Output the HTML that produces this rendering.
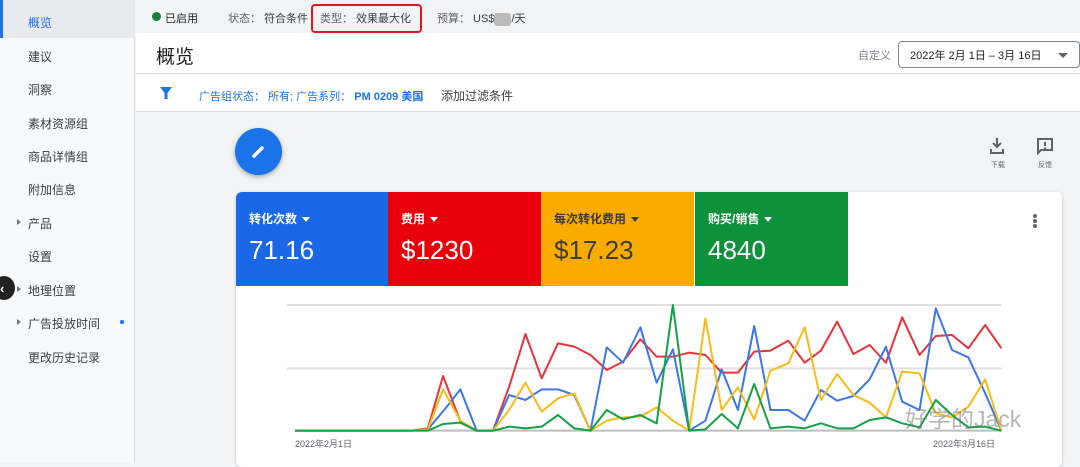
<!DOCTYPE html>
<html><head><meta charset="utf-8"><style>
*{margin:0;padding:0;box-sizing:border-box}
body{width:1080px;height:463px;overflow:hidden;background:#f1f3f4;font-family:"Liberation Sans","Noto Sans CJK SC",sans-serif;color:#3c4043;position:relative}
.a{position:absolute}
.side{left:0;top:0;width:135px;height:463px;background:#f8f9fa;border-right:1px solid #e0e0e0}
.side div{position:absolute;left:28px;font-size:12px;color:#3c4043}
.tri{position:absolute;left:17px;width:0;height:0;border-top:3px solid transparent;border-bottom:3px solid transparent;border-left:4px solid #777}
.t{font-size:11px;white-space:nowrap}
.tile{position:absolute;top:192px;height:94px;width:153px;color:#fff}
.tile .l{position:absolute;left:13px;top:18px;font-size:12px;font-weight:bold}
.tile .v{position:absolute;left:13px;top:43px;font-size:26px}
.dd{display:inline-block;width:0;height:0;border-left:4px solid transparent;border-right:4px solid transparent;border-top:5px solid currentColor;margin-left:5px;vertical-align:middle}
</style></head><body>
<div class="a side">
  <div style="left:0;top:0;width:135px;height:38px;background:#e8eaed;border-left:3px solid #1a73e8"></div>
  <div style="top:14px;color:#1a73e8">概览</div>
  <div style="top:48px">建议</div>
  <div style="top:81px">洞察</div>
  <div style="top:115px">素材资源组</div>
  <div style="top:148px">商品详情组</div>
  <div style="top:181px">附加信息</div>
  <span class="tri" style="top:219px"></span><div style="top:215px">产品</div>
  <div style="top:248px">设置</div>
  <span class="tri" style="top:286px"></span><div style="top:282px">地理位置</div>
  <span class="tri" style="top:319px"></span><div style="top:315px">广告投放时间</div>
  <span class="a" style="left:120px;top:320px;width:4px;height:4px;border-radius:50%;background:#1a73e8"></span>
  <div style="top:349px">更改历史记录</div>
</div>
<div class="a" style="left:-7px;top:276px;width:22px;height:24px;border-radius:50%;background:#222"></div>
<div class="a" style="left:0;top:281px;color:#fff;font-size:13px;font-weight:bold">‹</div>
<!-- top bar -->
<div class="a" style="left:136px;top:0;width:944px;height:33px;background:#f1f3f4"></div>
<span class="a" style="left:152px;top:12px;width:9px;height:9px;border-radius:50%;background:#188038"></span>
<div class="a t" style="left:165px;top:10px;color:#202124">已启用</div>
<div class="a t" style="left:228px;top:10px"><span style="color:#5f6368">状态：</span> 符合条件</div>
<div class="a" style="left:311px;top:4px;width:111px;height:29px;border:2px solid #e3161b;border-radius:4px"></div>
<div class="a t" style="left:320px;top:10px"><span style="color:#5f6368">类型：</span> 效果最大化</div>
<div class="a t" style="left:437px;top:10px"><span style="color:#5f6368">预算：</span> US$<span style="display:inline-block;width:17px;height:13px;background:#bbb;border-radius:3px;vertical-align:middle"></span>/天</div>
<!-- header -->
<div class="a" style="left:136px;top:33px;width:944px;height:41px;background:#fff;border-bottom:1px solid #dadce0"></div>
<div class="a" style="left:156px;top:42px;font-size:19px;color:#202124">概览</div>
<div class="a t" style="left:858px;top:47px;color:#80868b">自定义</div>
<div class="a" style="left:898px;top:41px;width:182px;height:27px;border:1px solid #80868b;border-radius:4px;background:#fff"></div>
<div class="a t" style="left:910px;top:47px;color:#202124">2022年 2月 1日 – 3月 16日</div>
<div class="a" style="left:1058px;top:53px;border-left:5px solid transparent;border-right:5px solid transparent;border-top:5px solid #5f6368"></div>
<!-- filter -->
<div class="a" style="left:136px;top:75px;width:944px;height:37px;background:#fff;border-bottom:1px solid #dadce0"></div>
<svg class="a" style="left:159px;top:86px" width="14" height="14" viewBox="0 0 14 14"><path d="M1 1h12l-4.5 6v6h-3V7z" fill="#1a73e8"/></svg>
<div class="a t" style="left:199px;top:88px;color:#1a73e8">广告组状态： 所有; 广告系列： <b>PM 0209 美国</b></div>
<div class="a" style="left:441px;top:87px;font-size:12px;color:#3c4043">添加过滤条件</div>
<!-- fab -->
<div class="a" style="left:235px;top:128px;width:47px;height:47px;border-radius:50%;background:#1a73e8;box-shadow:0 2px 5px rgba(0,0,0,.3)"></div>
<svg class="a" style="left:251px;top:144px" width="15" height="15" viewBox="0 0 15 15"><path d="M3 12L11 4" stroke="#fff" stroke-width="3.5" stroke-linecap="round"/></svg>
<svg class="a" style="left:989px;top:137px" width="16" height="18" viewBox="0 0 16 18"><path d="M8 1v9M4 6l4 4 4-4M2 12v4h12v-4" stroke="#5f6368" stroke-width="2" fill="none"/></svg>
<div class="a" style="left:991px;top:160px;font-size:7px;color:#5f6368">下载</div>
<svg class="a" style="left:1036px;top:137px" width="18" height="18" viewBox="0 0 18 18"><path d="M2 2h14v11H5l-3 3z" stroke="#5f6368" stroke-width="2" fill="none"/><path d="M9 5v4M9 10.5v1.5" stroke="#5f6368" stroke-width="2"/></svg>
<div class="a" style="left:1038px;top:160px;font-size:7px;color:#5f6368">反馈</div>
<!-- card -->
<div class="a" style="left:236px;top:192px;width:826px;height:275px;background:#fff;border-radius:6px;box-shadow:0 1px 3px rgba(0,0,0,.2)"></div>
<div class="tile" style="left:236px;background:#1a67e8;border-top-left-radius:6px"><div class="l">转化次数<span class="dd"></span></div><div class="v">71.16</div></div>
<div class="tile" style="left:388px;background:#e8000b"><div class="l">费用<span class="dd"></span></div><div class="v">$1230</div></div>
<div class="tile" style="left:541px;background:#f9ab00;color:#3c3c3c"><div class="l">每次转化费用<span class="dd"></span></div><div class="v">$17.23</div></div>
<div class="tile" style="left:695px;background:#0d9139"><div class="l">购买/销售<span class="dd"></span></div><div class="v">4840</div></div>
<div class="a" style="left:1033px;top:214px;width:4px;height:4px;border-radius:50%;background:#5f6368;box-shadow:0 5px 0 #5f6368,0 10px 0 #5f6368"></div>
<svg class="a" style="left:230px;top:180px" width="850" height="283" viewBox="0 0 1568 849" preserveAspectRatio="none">
<g fill="none" stroke-width="2" vector-effect="non-scaling-stroke" stroke-linejoin="round">
<path d="M105 375H1423M105 565H1423" stroke="#e0e0e0" vector-effect="non-scaling-stroke"/>
<path d="M120 752H1423" stroke="#bdbdbd" vector-effect="non-scaling-stroke"/>
<polyline vector-effect="non-scaling-stroke" stroke="#e8333a" points="120,752 335,752 365,745 393,588 425,725 455,752 485,752 515,620 545,462 575,595 605,490 635,500 665,525 695,570 725,545 757,478 787,530 817,530 847,518 877,525 907,578 937,578 967,515 997,512 1030,482 1060,548 1090,512 1120,425 1150,522 1180,495 1210,548 1240,412 1272,525 1302,468 1332,465 1362,505 1393,435 1423,505"/>
<polyline vector-effect="non-scaling-stroke" stroke="#3b78e7" points="120,752 335,752 365,748 395,690 425,628 455,752 485,752 515,645 545,660 575,628 605,628 635,645 665,752 695,502 725,548 757,442 787,608 817,508 847,752 877,722 907,568 937,690 967,438 997,690 1030,690 1060,722 1090,630 1120,662 1150,648 1180,598 1210,500 1240,665 1272,690 1302,385 1332,510 1362,532 1393,640 1423,752"/>
<polyline vector-effect="non-scaling-stroke" stroke="#f9bb16" points="120,752 335,752 365,748 393,628 425,722 455,752 485,752 515,690 545,608 575,695 605,655 635,640 665,752 695,722 725,712 757,710 787,682 817,722 847,752 877,415 907,690 937,622 967,718 997,572 1030,550 1060,442 1090,660 1120,582 1150,645 1180,668 1210,712 1240,575 1272,580 1302,700 1332,712 1362,680 1393,598 1423,752"/>
<polyline vector-effect="non-scaling-stroke" stroke="#16a046" points="120,752 335,752 365,752 393,732 425,728 455,752 485,752 515,740 545,745 575,740 605,705 635,745 665,752 695,690 725,718 757,705 787,730 817,375 847,752 877,748 907,702 937,745 967,612 997,745 1030,740 1060,745 1090,730 1120,745 1150,745 1180,720 1210,712 1240,730 1272,742 1302,660 1332,705 1362,742 1393,740 1423,752"/>
</g></svg>
<div class="a" style="left:295px;top:437px;font-size:9px;color:#5f6368">2022年2月1日</div>
<div class="a" style="left:933px;top:437px;font-size:9px;color:#5f6368">2022年3月16日</div>
<div class="a" style="left:905px;top:400px;font-size:23px;color:rgba(120,120,120,.55)">好学的Jack</div>
</body></html>
